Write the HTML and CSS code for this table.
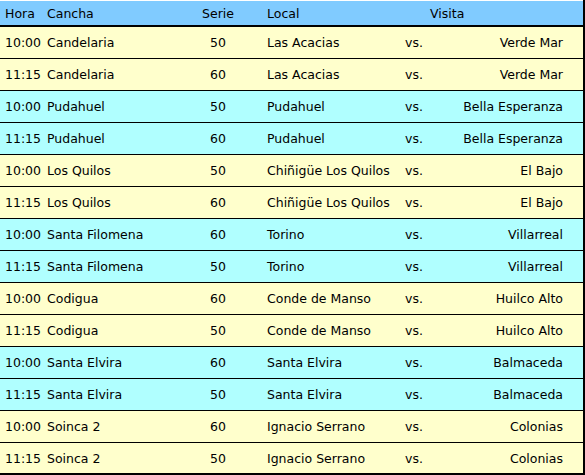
FILE: index.html
```html
<!DOCTYPE html>
<html>
<head>
<meta charset="utf-8">
<link rel="stylesheet" href="styles.css">
</head>
<body>
<div class="tabla">
  <div class="fila cab">
    <div class="c hora">Hora</div><div class="c cancha">Cancha</div><div class="c serie">Serie</div><div class="c local">Local</div><div class="c vs"></div><div class="c visita-h">Visita</div>
  </div>
  <div class="fila am"><div class="c hora">10:00</div><div class="c cancha">Candelaria</div><div class="c serie">50</div><div class="c local">Las Acacias</div><div class="c vs">vs.</div><div class="c visita">Verde Mar</div></div>
  <div class="fila am"><div class="c hora">11:15</div><div class="c cancha">Candelaria</div><div class="c serie">60</div><div class="c local">Las Acacias</div><div class="c vs">vs.</div><div class="c visita">Verde Mar</div></div>
  <div class="fila ce"><div class="c hora">10:00</div><div class="c cancha">Pudahuel</div><div class="c serie">50</div><div class="c local">Pudahuel</div><div class="c vs">vs.</div><div class="c visita">Bella Esperanza</div></div>
  <div class="fila ce"><div class="c hora">11:15</div><div class="c cancha">Pudahuel</div><div class="c serie">60</div><div class="c local">Pudahuel</div><div class="c vs">vs.</div><div class="c visita">Bella Esperanza</div></div>
  <div class="fila am"><div class="c hora">10:00</div><div class="c cancha">Los Quilos</div><div class="c serie">50</div><div class="c local">Chiñigüe Los Quilos</div><div class="c vs">vs.</div><div class="c visita">El Bajo</div></div>
  <div class="fila am"><div class="c hora">11:15</div><div class="c cancha">Los Quilos</div><div class="c serie">60</div><div class="c local">Chiñigüe Los Quilos</div><div class="c vs">vs.</div><div class="c visita">El Bajo</div></div>
  <div class="fila ce"><div class="c hora">10:00</div><div class="c cancha">Santa Filomena</div><div class="c serie">60</div><div class="c local">Torino</div><div class="c vs">vs.</div><div class="c visita">Villarreal</div></div>
  <div class="fila ce"><div class="c hora">11:15</div><div class="c cancha">Santa Filomena</div><div class="c serie">50</div><div class="c local">Torino</div><div class="c vs">vs.</div><div class="c visita">Villarreal</div></div>
  <div class="fila am"><div class="c hora">10:00</div><div class="c cancha">Codigua</div><div class="c serie">60</div><div class="c local">Conde de Manso</div><div class="c vs">vs.</div><div class="c visita">Huilco Alto</div></div>
  <div class="fila am"><div class="c hora">11:15</div><div class="c cancha">Codigua</div><div class="c serie">50</div><div class="c local">Conde de Manso</div><div class="c vs">vs.</div><div class="c visita">Huilco Alto</div></div>
  <div class="fila ce"><div class="c hora">10:00</div><div class="c cancha">Santa Elvira</div><div class="c serie">60</div><div class="c local">Santa Elvira</div><div class="c vs">vs.</div><div class="c visita">Balmaceda</div></div>
  <div class="fila ce"><div class="c hora">11:15</div><div class="c cancha">Santa Elvira</div><div class="c serie">50</div><div class="c local">Santa Elvira</div><div class="c vs">vs.</div><div class="c visita">Balmaceda</div></div>
  <div class="fila am"><div class="c hora">10:00</div><div class="c cancha">Soinca 2</div><div class="c serie">60</div><div class="c local">Ignacio Serrano</div><div class="c vs">vs.</div><div class="c visita">Colonias</div></div>
  <div class="fila am ult"><div class="c hora">11:15</div><div class="c cancha">Soinca 2</div><div class="c serie">50</div><div class="c local">Ignacio Serrano</div><div class="c vs">vs.</div><div class="c visita">Colonias</div></div>
</div>
</body>
</html>
```

FILE: styles.css
```css
html, body {
  margin: 0;
  padding: 0;
  background: #ffffff;
}
body {
  font-family: "DejaVu Sans", Verdana, sans-serif;
  font-size: 12.5px;
  color: #000;
}
.tabla {
  width: 583px;
  border-right: 2px solid #000;
  border-bottom: 2px solid #000;
  padding-top: 1px;
}
.fila {
  display: grid;
  grid-template-columns: 42px 148px 56px 154px 25px 158px;
  height: 31px;
  align-items: center;
  border-bottom: 1px solid #000;
}
.fila.ult {
  border-bottom: none;
  height: 30px;
}
.cab {
  background: #80cbff;
  height: 24px;
  border-bottom: 2px solid #000;
}
.am { background: #ffffcc; }
.ce { background: #b0ffff; }
.c {
  white-space: nowrap;
}
.hora { padding-left: 5px; }
.cancha { padding-left: 5px; }
.serie { text-align: center; }
.local { padding-left: 21px; }
.vs { padding-left: 5px; }
.visita { text-align: right; padding-right: 20px; }
.visita-h { padding-left: 5px; }
```
